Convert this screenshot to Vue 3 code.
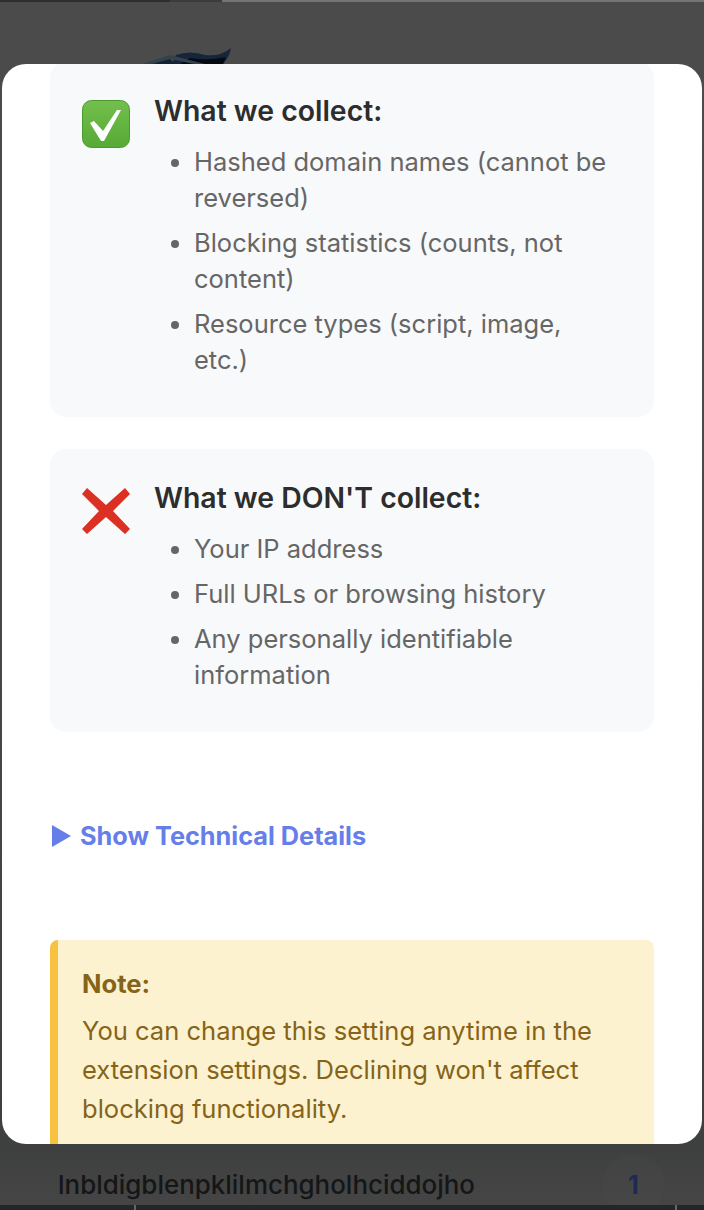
<script setup>
const collected = [
  'Hashed domain names (cannot be reversed)',
  'Blocking statistics (counts, not content)',
  'Resource types (script, image, etc.)',
];
const notCollected = [
  'Your IP address',
  'Full URLs or browsing history',
  'Any personally identifiable information',
];
</script>

<template>
  <div class="page">
    <div class="backdrop">
      <div class="topline"></div>
      <div class="behind-row">
        <span class="ext-id">lnbldigblenpklilmchgholhciddojho</span>
        <span class="count">1</span>
      </div>
      <div class="bottomline"></div>
    </div>

    <svg class="logo" width="110" height="24" viewBox="0 0 110 24">
      <path d="M42 24 L46 15 Q60 10 75 15 Q90 17 101 8 Q100 16 93 24 Z" fill="#16263a" />
      <path d="M50 24 L60 18 Q78 21 96 17 L93 24 Z" fill="#050a12" />
      <path d="M12 24 L40 15 L75 24 L64 24 L40 19 L22 24 Z" fill="#33434e" />
      <path d="M22 24 L40 19 L45 24 Z" fill="#14222f" />
    </svg>

    <div class="modal">
      <section class="card first">
        <svg class="icon" width="48" height="48" viewBox="0 0 48 48">
          <defs>
            <linearGradient id="tile" x1="0" y1="0" x2="0" y2="1">
              <stop offset="0" stop-color="#74bf4d" />
              <stop offset="1" stop-color="#55aa35" />
            </linearGradient>
          </defs>
          <rect x="0.5" y="0.5" width="47" height="47" rx="9" fill="url(#tile)" stroke="#4a9a2c" />
          <path d="M8 23 L12 21 L21 31 L35 10 L39 10 L22 41 L19 41 Z" fill="#fff" />
        </svg>
        <div class="card-text">
          <h3>What we collect:</h3>
          <ul>
            <li v-for="item in collected" :key="item">{{ item }}</li>
          </ul>
        </div>
      </section>

      <section class="card">
        <svg class="icon cross" width="48" height="48" viewBox="0 0 48 48">
          <path d="M5 0 L24 17 L43 0 L48 6 L31 23 L48 41 L43 46 L24 29 L5 46 L0 41 L17 23 L0 6 Z" fill="#dc3022" />
        </svg>
        <div class="card-text">
          <h3>What we DON'T collect:</h3>
          <ul>
            <li v-for="item in notCollected" :key="item">{{ item }}</li>
          </ul>
        </div>
      </section>

      <div class="details">
        <svg width="19" height="22" viewBox="0 0 19 22">
          <path d="M0 0 L19 11 L0 22 Z" fill="#667eea" />
        </svg>
        <span>Show Technical Details</span>
      </div>

      <div class="note">
        <strong>Note:</strong>
        <p>You can change this setting anytime in the extension settings. Declining won't affect blocking functionality.</p>
      </div>
    </div>
  </div>
</template>

<style scoped>
.page {
  position: relative;
  width: 704px;
  height: 1210px;
  overflow: hidden;
  font-family: Inter, "Liberation Sans", sans-serif;
}

.backdrop {
  height: 100%;
  display: flex;
  flex-direction: column;
  background: linear-gradient(#4b4b4b, #484848 50%, #3e3f3f 95%);
}

.topline {
  height: 2px;
  background: linear-gradient(90deg, #2e2e2e 170px, #3c3c3c 170px, #3c3c3c 222px, #747474 222px);
}

.behind-row {
  margin-top: auto;
  height: 64px;
  padding: 0 39px 0 58px;
  display: flex;
  align-items: center;
  justify-content: space-between;
  box-sizing: border-box;
  background: linear-gradient(#3e3f3f, #454545);
}

.ext-id {
  font-size: 25.95px;
  font-weight: 500;
  color: #151617;
  padding-top: 22px;
}

.count {
  width: 63px;
  height: 62px;
  margin-top: 24px;
  display: flex;
  align-items: center;
  justify-content: center;
  border-radius: 50%;
  background: rgba(255, 255, 255, 0.01);
  font-size: 25px;
  font-weight: 700;
  color: #1f2a52;
}

.bottomline {
  height: 5px;
  background: linear-gradient(90deg, #262626 134px, #666 134px, #666 136px, #262626 136px, #262626 675px, #666 675px, #666 677px, #262626 677px);
}

.logo {
  position: absolute;
  left: 130px;
  top: 40px;
}

.modal {
  position: absolute;
  left: 2px;
  top: 64px;
  width: 700px;
  height: 1080px;
  box-sizing: border-box;
  padding: 0 48px;
  background: #fff;
  border-radius: 24px;
  overflow: hidden;
}

.card {
  display: flex;
  gap: 24px;
  padding: 31px 40px 39px 32px;
  background: #f8f9fa;
  border-radius: 16px;
  margin-bottom: 32px;
}

.card.first {
  margin-top: -2px;
}

.icon {
  flex: none;
  margin-top: 7px;
}

.icon.cross {
  margin-top: 8px;
}

h3 {
  margin: 0 0 15px;
  font-size: 28.4px;
  line-height: 36px;
  font-weight: 600;
  color: #2d2d2d;
}

ul {
  margin: 0;
  padding: 0 0 0 40px;
}

li {
  font-size: 25.5px;
  line-height: 36px;
  color: #666;
  margin-bottom: 9px;
}

li:last-child {
  margin-bottom: 0;
}

.details {
  display: flex;
  align-items: center;
  gap: 9px;
  margin-top: 89px;
  padding-left: 2px;
  font-size: 25.3px;
  line-height: 30px;
  font-weight: 700;
  color: #667eea;
}

.note {
  margin-top: 89px;
  padding: 24px 26px 24px 24px;
  background: #fdf2d0;
  border-left: 8px solid #f7c242;
  border-radius: 8px;
  color: #856419;
  font-size: 25.55px;
  line-height: 39px;
}

.note strong {
  display: block;
  font-weight: 700;
}

.note p {
  margin: 8px 0 0;
}
</style>

<style>
html,
body {
  margin: 0;
  background: #484848;
}
</style>
